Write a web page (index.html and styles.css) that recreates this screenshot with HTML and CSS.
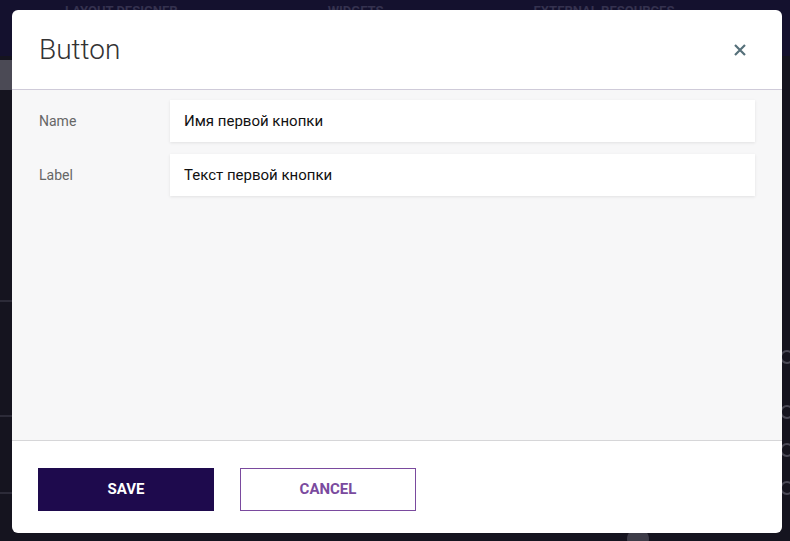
FILE: index.html
```html
<!DOCTYPE html>
<html lang="ru">
<head>
<meta charset="utf-8">
<title>Button</title>
<link rel="stylesheet" href="styles.css">
</head>
<body>
<div class="backdrop">
  <div class="bg-top">
    <span class="bg-tab">LAYOUT DESIGNER</span>
    <span class="bg-tab">WIDGETS</span>
    <span class="bg-tab">EXTERNAL RESOURCES</span>
  </div>
  <div class="bg-strip"></div>
  <div class="bg-line bg-line-1"></div>
  <div class="bg-line bg-line-2"></div>
  <div class="bg-line bg-line-3"></div>
  <div class="bg-dot bg-dot-1"></div>
  <div class="bg-dot bg-dot-2"></div>
  <div class="bg-dot bg-dot-3"></div>
  <div class="bg-dot bg-dot-4"></div>
  <div class="bg-knob"></div>
  <div class="modal">
    <div class="modal-header">
      <h1 class="modal-title">Button</h1>
      <button class="close" aria-label="Close">
        <svg width="12" height="12" viewBox="0 0 12 12"><path d="M1 1L11 11M11 1L1 11" stroke="#56707a" stroke-width="2.2" stroke-linecap="butt"/></svg>
      </button>
    </div>
    <div class="modal-body">
      <div class="row">
        <label class="label">Name</label>
        <div class="input">Имя первой кнопки</div>
      </div>
      <div class="row">
        <label class="label">Label</label>
        <div class="input">Текст первой кнопки</div>
      </div>
    </div>
    <div class="modal-footer">
      <button class="btn btn-primary">SAVE</button>
      <button class="btn btn-outline">CANCEL</button>
    </div>
  </div>
</div>
</body>
</html>
```
FILE: styles.css
```css
html, body {
  margin: 0;
  padding: 0;
  width: 790px;
  height: 541px;
  overflow: hidden;
  background: #15141f;
  font-family: Roboto, "Noto Sans", "Liberation Sans", sans-serif;
}
.backdrop {
  position: relative;
  width: 790px;
  height: 541px;
  background: linear-gradient(#14112e 0, #14112e 56px, #15141f 56px);
  padding: 10px 8px 8px 12px;
  box-sizing: border-box;
  overflow: hidden;
}
.bg-top {
  position: absolute;
  left: 0;
  top: 4px;
  width: 790px;
  display: flex;
  gap: 150px;
  padding-left: 65px;
  box-sizing: border-box;
}
.bg-tab {
  color: #35324f;
  font-size: 13px;
  font-weight: 700;
  line-height: 14px;
}
.bg-strip {
  position: absolute;
  left: 0;
  top: 60px;
  width: 12px;
  height: 30px;
  background: #4b4a55;
}
.bg-line {
  position: absolute;
  left: 0;
  width: 12px;
  height: 2px;
  background: #2c2b38;
}
.bg-line-1 { top: 300px; }
.bg-line-2 { top: 415px; }
.bg-line-3 { top: 492px; }
.bg-dot {
  position: absolute;
  left: 780px;
  width: 10px;
  height: 10px;
  border-radius: 50%;
  border: 2px solid #4a4956;
}
.bg-dot-1 { top: 350px; }
.bg-dot-2 { top: 405px; }
.bg-dot-3 { top: 443px; }
.bg-dot-4 { top: 481px; }
.bg-knob {
  position: absolute;
  left: 627px;
  top: 528px;
  width: 22px;
  height: 22px;
  border-radius: 50%;
  background: #3d3c48;
}
.modal {
  position: relative;
  z-index: 1;
  width: 770px;
  height: 523px;
  background: #fff;
  border-radius: 6px;
  overflow: hidden;
  display: flex;
  flex-direction: column;
}
.modal-header {
  height: 79px;
  border-bottom: 1px solid #cfcbd9;
  display: flex;
  align-items: center;
  justify-content: space-between;
  padding: 0 36px 0 27px;
  flex: none;
}
.modal-title {
  margin: 0;
  font-size: 28px;
  font-weight: 300;
  color: #333;
  line-height: 1;
}
.close {
  border: 0;
  background: none;
  padding: 0;
  width: 12px;
  height: 12px;
  display: flex;
  cursor: pointer;
}
.modal-body {
  height: 350px;
  background: #f7f7f8;
  padding: 10px 27px 0 27px;
  box-sizing: border-box;
  display: flex;
  flex-direction: column;
  gap: 12px;
  flex: none;
}
.row {
  display: flex;
  align-items: center;
}
.label {
  width: 131px;
  flex: none;
  font-size: 14px;
  color: #666;
}
.input {
  flex: 1;
  height: 42px;
  background: #fff;
  box-shadow: 0 1px 3px rgba(0, 0, 0, 0.09);
  display: flex;
  align-items: center;
  padding-left: 14px;
  font-size: 15px;
  color: #111;
}
.modal-footer {
  flex: 1;
  border-top: 1px solid #d6d6d8;
  display: flex;
  align-items: flex-start;
  gap: 26px;
  padding: 27px 0 0 26px;
}
.btn {
  width: 176px;
  height: 43px;
  font-family: Roboto, "Liberation Sans", sans-serif;
  font-size: 15px;
  font-weight: 700;
  box-sizing: border-box;
  cursor: pointer;
  padding: 0 0 2px 0;
}
.btn-primary {
  background: #1e0a4d;
  color: #fff;
  border: 0;
}
.btn-outline {
  background: #fff;
  color: #7a4a9e;
  border: 1px solid #7a4a9e;
}
```
